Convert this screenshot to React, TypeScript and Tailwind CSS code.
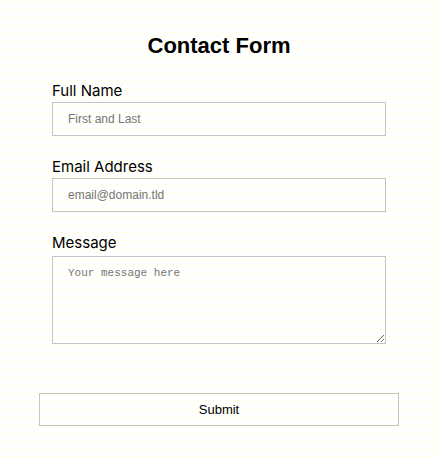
export default function App() {
  return (
    <div className="min-h-[460px] bg-white bg-[conic-gradient(at_1px_1px,transparent_270deg,#ffff66_270deg),conic-gradient(at_1px_1px,transparent_270deg,#ffff66_270deg)] bg-[size:8px_8px] bg-[position:5px_0px,1px_4px] font-['Liberation_Sans',Arial,sans-serif] text-black">
      <div className="mx-auto w-[360px] pt-[32px]">
        <h1 className="text-center text-[22px] leading-[28px] font-bold">Contact Form</h1>
        <form className="mt-[21px] px-[13px]" onSubmit={(e) => e.preventDefault()}>
          <label className="block font-['Inter',sans-serif] text-[15px] leading-5">Full Name</label>
          <input
            type="text"
            placeholder="First and Last"
            className="mt-px block h-[34px] w-full border border-[#c4c4c4] bg-transparent px-[15px] text-[12px] placeholder:text-[#757575] outline-none"
          />
          <label className="mt-[21px] block font-['Inter',sans-serif] text-[15px] leading-5">Email Address</label>
          <input
            type="email"
            placeholder="email@domain.tld"
            className="mt-px block h-[34px] w-full border border-[#c4c4c4] bg-transparent px-[15px] text-[12px] placeholder:text-[#757575] outline-none"
          />
          <label className="mt-[21px] block font-['Inter',sans-serif] text-[15px] leading-5">Message</label>
          <textarea
            placeholder="Your message here"
            className="mt-[3px] block h-[88px] w-full border border-[#c4c4c4] bg-transparent px-[15px] py-[8px] font-['Liberation_Mono',monospace] text-[11px] placeholder:text-[#757575] outline-none"
          />
        </form>
        <button
          type="button"
          className="mt-[49px] block h-[33px] w-full border border-[#c4c4c4] bg-transparent text-[13px] text-black"
        >
          Submit
        </button>
      </div>
    </div>
  );
}
